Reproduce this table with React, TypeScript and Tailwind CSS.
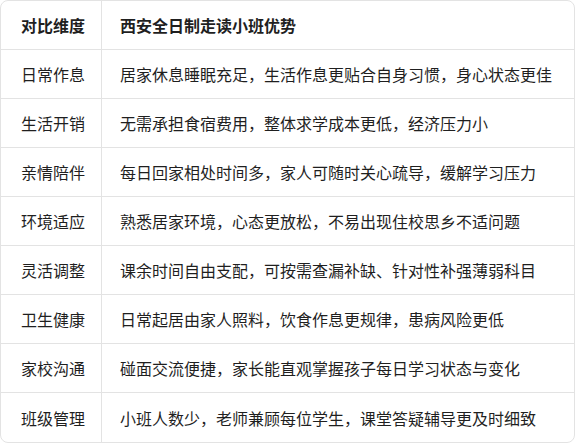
const ROWS = [
  ["日常作息", "居家休息睡眠充足，生活作息更贴合自身习惯，身心状态更佳"],
  ["生活开销", "无需承担食宿费用，整体求学成本更低，经济压力小"],
  ["亲情陪伴", "每日回家相处时间多，家人可随时关心疏导，缓解学习压力"],
  ["环境适应", "熟悉居家环境，心态更放松，不易出现住校思乡不适问题"],
  ["灵活调整", "课余时间自由支配，可按需查漏补缺、针对性补强薄弱科目"],
  ["卫生健康", "日常起居由家人照料，饮食作息更规律，患病风险更低"],
  ["家校沟通", "碰面交流便捷，家长能直观掌握孩子每日学习状态与变化"],
  ["班级管理", "小班人数少，老师兼顾每位学生，课堂答疑辅导更及时细致"],
];

export default function App() {
  return (
    <div
      className="w-[575px] h-[443px] bg-white text-[16px] text-[#1f1f1f]"
      style={{ fontFamily: '"Noto Sans CJK SC", "Noto Sans", sans-serif' }}
    >
      <div className="border border-[#e3e3e3] rounded-lg overflow-hidden">
        {/* header */}
        <div className="grid grid-cols-[101px_1fr] h-[49px] border-b border-[#e3e3e3] font-bold">
          <div className="flex items-center pl-5 border-r border-[#e3e3e3]">对比维度</div>
          <div className="flex items-center pl-[18px]">西安全日制走读小班优势</div>
        </div>
        {ROWS.map(([k, v], i) => (
          <div
            key={k}
            className={
              "grid grid-cols-[101px_1fr] h-[49px]" +
              (i < ROWS.length - 1 ? " border-b border-[#e3e3e3]" : "")
            }
          >
            <div className="flex items-center pl-5 border-r border-[#e3e3e3]">{k}</div>
            <div className="flex items-center pl-[18px] whitespace-nowrap">{v}</div>
          </div>
        ))}
      </div>
    </div>
  );
}
